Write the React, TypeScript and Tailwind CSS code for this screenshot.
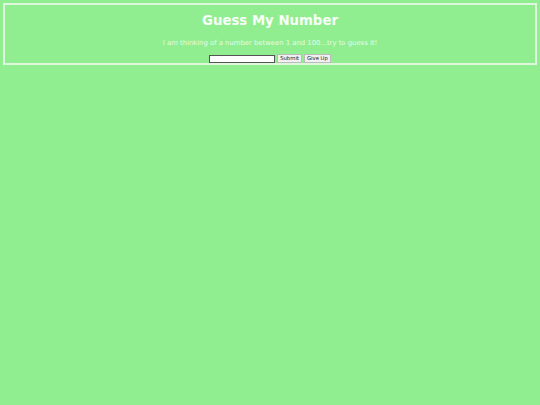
export default function App() {
  return (
    <div className="min-h-[405px] w-[540px] bg-[#90ee90] pt-[3px] font-['DejaVu_Sans',Verdana,sans-serif]">
      <div className="mx-[3px] border-2 border-[#dcf7dc] text-center text-[#f8fff8]">
        <h1 className="pt-[8px] text-[13.3px] font-bold leading-[16px]">Guess My Number</h1>
        <p className="mt-[10px] text-[6.85px] leading-[8px] text-[#e6fae6]">
          I am thinking of a number between 1 and 100...try to guess it!
        </p>
        <div className="mt-[7px] flex h-[9px] items-center justify-center gap-[2px]">
          <input
            type="text"
            className="h-[8px] w-[66px] border border-[#555] bg-white"
          />
          <button className="h-[9px] border border-[#bbb] bg-[#f0f0f0] px-[2px] text-[5.3px] leading-[7px] text-[#222]">
            Submit
          </button>
          <button className="h-[9px] border border-[#bbb] bg-[#f0f0f0] px-[2px] text-[5.3px] leading-[7px] text-[#222]">
            Give Up
          </button>
        </div>
      </div>
    </div>
  );
}
